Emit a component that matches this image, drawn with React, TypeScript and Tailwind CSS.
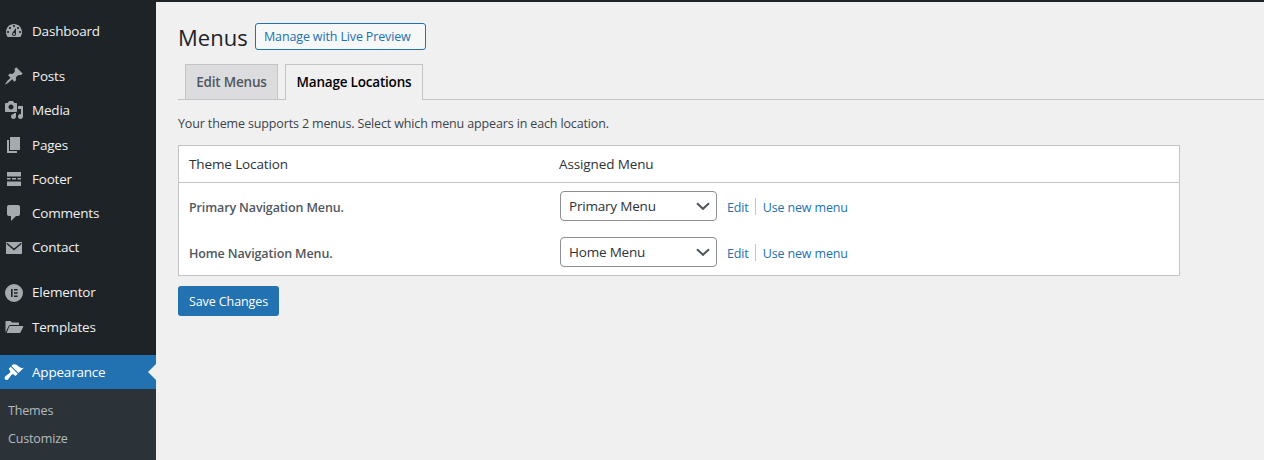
import type { ReactNode } from 'react'

const P = ({ d }: { d: string }) => <path d={d} fill="currentColor" fillRule="evenodd" />

const icons: Record<string, ReactNode> = {
  dashboard: <P d="M3.76 16h12.48c1.1-1.37 1.76-3.11 1.76-5 0-4.42-3.58-8-8-8s-8 3.58-8 8c0 1.89.66 3.63 1.76 5zM10 4c.55 0 1 .45 1 1s-.45 1-1 1-1-.45-1-1 .45-1 1-1zM6 6c.55 0 1 .45 1 1s-.45 1-1 1-1-.45-1-1 .45-1 1-1zm8 0c.55 0 1 .45 1 1s-.45 1-1 1-1-.45-1-1 .45-1 1-1zm-5.37 5.55L12 7v6c0 1.1-.9 2-2 2s-2-.9-2-2c0-.57.24-1.08.63-1.45zM4 10c.55 0 1 .45 1 1s-.45 1-1 1-1-.45-1-1 .45-1 1-1zm12 0c.55 0 1 .45 1 1s-.45 1-1 1-1-.45-1-1 .45-1 1-1zm-5 3c0-.55-.45-1-1-1s-1 .45-1 1 .45 1 1 1 1-.45 1-1z" />,
  posts: <P d="M10.44 3.02l1.82-1.82 6.36 6.35-1.83 1.82c-1.05-.68-2.48-.57-3.41.36l-.75.75c-.92.93-1.04 2.35-.35 3.41l-1.83 1.82-2.41-2.41-2.8 2.79c-.42.42-3.38 2.71-3.8 2.29s1.86-3.39 2.28-3.81l2.79-2.79L4.1 9.36l1.83-1.82c1.05.69 2.48.57 3.4-.36l.75-.75c.93-.92 1.05-2.35.36-3.41z" />,
  media: <P d="M13 11V4c0-.55-.45-1-1-1h-1.67L9 1H5L3.67 3H2c-.55 0-1 .45-1 1v7c0 .55.45 1 1 1h10c.55 0 1-.45 1-1zM7 4.5c1.38 0 2.5 1.12 2.5 2.5S8.38 9.5 7 9.5 4.5 8.38 4.5 7 5.62 4.5 7 4.5zM14 6h5v10.5c0 1.38-1.12 2.5-2.5 2.5S14 17.88 14 16.5s1.12-2.5 2.5-2.5c.17 0 .34.02.5.05V9h-3V6zm-4 8.05V13h2v3.5c0 1.38-1.12 2.5-2.5 2.5S7 17.88 7 16.5 8.12 14 9.5 14c.17 0 .34.02.5.05z" />,
  pages: <P d="M6 15V2h10v13H6zm-1 1h8v2H3V5h2v11z" />,
  footer: <P d="M3 3h14v4.5H3V3zm0 6h3.5v1.5H3V9zm5 0h4v1.5H8V9zm5.5 0H17v1.5h-3.5V9zM3 12.5h14V17H3v-4.5z" />,
  comments: <P d="M5 2h9c1.1 0 2 .9 2 2v7c0 1.1-.9 2-2 2h-2l-5 5v-5H5c-1.1 0-2-.9-2-2V4c0-1.1.9-2 2-2z" />,
  contact: <P d="M2.5 4h15c.3 0 .5.2.5.5v11c0 .3-.2.5-.5.5h-15c-.3 0-.5-.2-.5-.5v-11c0-.3.2-.5.5-.5zM10 12.4l7.2-6.2c.3-.3.4-.7.1-1-.3-.3-.7-.3-1 0L10 10.4 3.7 5.2c-.3-.3-.7-.3-1 0-.3.3-.2.7.1 1z" />,
  elementor: <P d="M10 1a9 9 0 1 0 0 18 9 9 0 0 0 0-18zM7 6h1.6v8H7V6zm3 0h3.6v1.6H10V6zm0 3.2h3.6v1.6H10V9.2zm0 3.2h3.6V14H10v-1.6z" />,
  templates: <P d="M1.5 15.5V5c0-.6.4-1 1-1h4l1.5 1.5h6c.6 0 1 .4 1 1V8H6.2c-.7 0-1.2.3-1.5.9L1.5 15.5zM6.3 9h12.2c.6 0 .9.5.7 1l-2.6 5.3c-.2.5-.7.7-1.2.7H2.6l2.6-6.3c.2-.5.6-.7 1.1-.7z" />,
  appearance: <P d="M14.48 11.06L7.41 3.99l1.5-1.5c.5-.56 2.3-.47 3.51.32 1.21.8 1.43 1.28 2.91 2.1 1.18.64 2.45 1.26 4.45.85zM6.7 4.7l7.07 7.07-2.2 2.2-2.4-1.6c-.5-.3-1-.2-1.4.2l-3.6 4.6c-.8.9-2.4 1-3.1.2s-.6-2.2.3-3l4.6-3.6c.4-.4.5-.9.2-1.4L4.7 6.7z" />,
}

function MenuItem({ icon, label, gap, active }: { icon: string; label: string; gap?: boolean; active?: boolean }) {
  return (
    <div
      className={`relative flex h-[34.3px] items-center text-[13.5px] tracking-[-0.2px] ${gap ? 'mt-[10.7px]' : ''} ${
        active ? 'bg-[#2271b1] text-white' : 'text-[#f0f0f1]'
      }`}
    >
      <svg
        viewBox="0 0 20 20"
        className={`ml-[4px] h-[20px] w-[20px] ${active ? 'text-white' : 'text-[#a7aaad]'}`}
      >
        {icons[icon]}
      </svg>
      <span className="ml-[8px] -translate-y-[0.5px]">{label}</span>
      {active && (
        <span className="absolute right-0 top-1/2 h-0 w-0 -translate-y-1/2 border-y-[8px] border-r-[8px] border-y-transparent border-r-[#f0f0f1]" />
      )}
    </div>
  )
}

function LocationRow({ name, value }: { name: string; value: string }) {
  return (
    <div className="flex h-[46px] items-center">
      <div className="w-[381px] pl-[10px] pt-[5px] text-[12.5px] font-semibold tracking-[-0.12px] text-[#50575e]">{name}</div>
      <div className="flex h-[30px] w-[157px] items-center justify-between rounded-[4px] border border-[#8c8f94] bg-white pl-[8px] pr-[5px] text-[13.5px] tracking-[-0.2px] text-[#2c3338]">
        <span>{value}</span>
        <svg viewBox="0 0 20 20" className="h-[16px] w-[16px] text-[#50575e]">
          <path d="M2.5 6.5L10 13.5L17.5 6.5" fill="none" stroke="currentColor" strokeWidth="2.5" />
        </svg>
      </div>
      <a className="ml-[10px] pt-[5px] text-[12.5px] tracking-[-0.14px] text-[#2271b1]">Edit</a>
      <span className="ml-[6px] mr-[7px] h-[17px] w-px bg-[#c3c4c7]" />
      <a className="pt-[5px] text-[12.5px] tracking-[-0.14px] text-[#2271b1]">Use new menu</a>
    </div>
  )
}

export default function App() {
  return (
    <div className="h-[460px] overflow-hidden bg-[#f0f0f1] font-['Open_Sans','Noto_Sans',sans-serif] text-[#3c434a]">
      <div className="h-[2px] bg-[#1d2327]" />
      <div className="flex h-[458px]">
        <aside className="w-[156px] shrink-0 bg-[#1d2327] pt-[12px]">
          <MenuItem icon="dashboard" label="Dashboard" />
          <MenuItem icon="posts" label="Posts" gap />
          <MenuItem icon="media" label="Media" />
          <MenuItem icon="pages" label="Pages" />
          <MenuItem icon="footer" label="Footer" />
          <MenuItem icon="comments" label="Comments" />
          <MenuItem icon="contact" label="Contact" />
          <MenuItem icon="elementor" label="Elementor" gap />
          <MenuItem icon="templates" label="Templates" />
          <MenuItem icon="appearance" label="Appearance" gap active />
          <div className="h-[71px] bg-[#2c3338] pl-[8px] pt-[8px] text-[12.5px] tracking-[-0.15px] text-[#f0f6fcb3]">
            <div className="h-[28px] leading-[28px]">Themes</div>
            <div className="h-[28px] leading-[28px]">Customize</div>
          </div>
        </aside>

        <main className="min-w-0 flex-1 pl-[22px]">
          <div className="flex items-center pt-[21px]">
            <h1 className="w-[68px] pb-[1px] text-[22px] leading-[28px] font-normal text-[#1d2327]">Menus</h1>
            <a className="mb-[2px] ml-[9px] flex h-[27px] w-[171px] items-center rounded-[3px] border border-[#2271b1] bg-[#f6f7f7] pl-[8px] pt-[2px] text-[12.5px] font-medium tracking-[-0.14px] text-[#2271b1]">
              Manage with Live Preview
            </a>
          </div>

          <div className="mt-[12px] flex h-[36px] items-end gap-[7px] border-b border-[#c3c4c7] pl-[7px]">
            <div className="flex h-[35px] w-[93px] items-center justify-center border border-b-0 border-[#c3c4c7] bg-[#dcdcde] text-[13.5px] font-semibold tracking-[-0.2px] text-[#50575e]">
              Edit Menus
            </div>
            <div className="-mb-px flex h-[36px] w-[138px] items-center justify-center border border-b-0 border-[#c3c4c7] bg-[#f0f0f1] text-[13.5px] font-semibold tracking-[-0.2px] text-[#000]">
              Manage Locations
            </div>
          </div>

          <p className="mt-[15px] text-[12.5px] leading-[18px] tracking-[-0.14px]">
            Your theme supports 2 menus. Select which menu appears in each location.
          </p>

          <div className="mt-[12px] w-[1002px] border border-[#c3c4c7] bg-white">
            <div className="flex h-[37px] items-center border-b border-[#c3c4c7] text-[13.5px] tracking-[-0.12px] text-[#2c3338]">
              <div className="w-[380px] pl-[10px]">Theme Location</div>
              <div>Assigned Menu</div>
            </div>
            <LocationRow name="Primary Navigation Menu." value="Primary Menu" />
            <LocationRow name="Home Navigation Menu." value="Home Menu" />
          </div>

          <button className="mt-[10px] flex h-[30px] w-[101px] items-center justify-center rounded-[3px] bg-[#2271b1] pt-[2px] text-[12.5px] tracking-[-0.1px] text-white">
            Save Changes
          </button>
        </main>
      </div>
    </div>
  )
}
